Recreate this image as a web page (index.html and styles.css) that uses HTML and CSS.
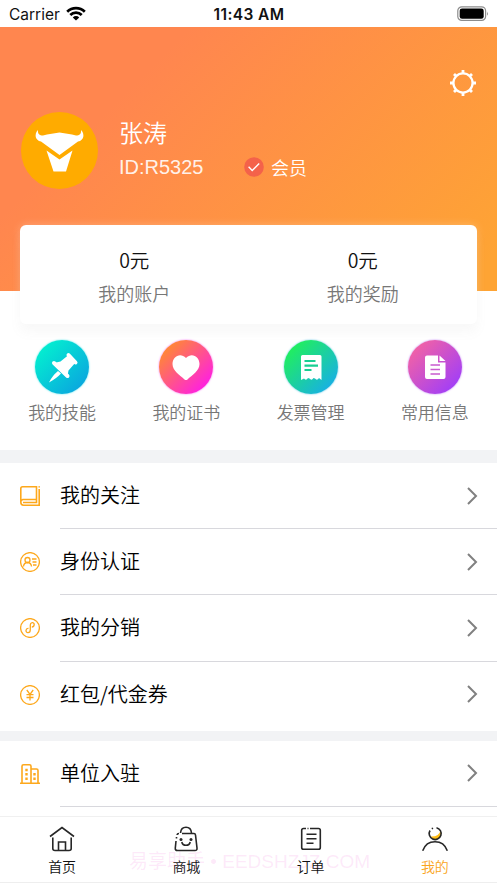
FILE: index.html
```
<!DOCTYPE html>
<html lang="zh-CN">
<head>
<meta charset="utf-8">
<title>我的</title>
<link rel="stylesheet" href="styles.css">
</head>
<body>
<div class="phone">
  <header class="status">
    <div class="carrier"><span>Carrier</span>
      <svg width="20" height="15" viewBox="0 0 20 15" fill="none" stroke="#000" stroke-width="2.7"><path d="M1.2 5.7a12.5 12.5 0 0 1 17.6 0M4.3 9a8 8 0 0 1 11.4 0"/><path d="M10 14.5 6.8 11.4a4.6 4.6 0 0 1 6.4 0Z" fill="#000" stroke="none"/></svg>
    </div>
    <div class="time">11:43 AM</div>
    <svg class="battery" width="32" height="16" viewBox="0 0 32 16"><rect x=".8" y=".8" width="27.8" height="13.6" rx="4" fill="none" stroke="#8c8c8c" stroke-width="1.2"/><rect x="2.7" y="2.5" width="24" height="10.2" rx="2.3"/><path d="M30 5.5q1.7 2 0 4.2Z" fill="#8c8c8c"/></svg>
  </header>

  <section class="hero">
    <svg class="gear" width="28" height="28" viewBox="0 0 28 28" fill="none" stroke="#fff"><circle cx="14" cy="14" r="9.6" stroke-width="2.3"/><path stroke-width="2.8" d="M14 4.5V1M14 23.5V27M4.5 14H1M23.5 14H27M7.3 7.3 5 5M20.7 7.3 23 5M7.3 20.7 5 23M20.7 20.7 23 23"/></svg>
    <div class="profile">
      <svg width="77" height="77" viewBox="0 0 77 77"><circle cx="38.5" cy="38.5" r="38.5" fill="#ffab00"/><path fill="#fff" d="M17 18C13 22 14 28.500 20 29.500L38.500 43 57 29.500C63 28.500 64 22 60 18 60.500 22 58.500 23.500 55 23.500L51 22.500 38.500 20.500 26 22.500 22 23.500C18.500 23.500 16.500 22 17 18ZM25.500 38.500 38.500 47.500 51.500 38.500 45 59.500H32.500Z"/></svg>
      <div class="who">
        <div class="name">张涛</div>
        <div class="idline"><span class="uid">ID:R5325</span>
          <svg width="20" height="20" viewBox="0 0 20 20"><circle cx="10" cy="10" r="9.8" fill="#f4624a"/><path d="m4.600 9.800 3.600 3.700 7-7" fill="none" stroke="#fff" stroke-width="1.400"/></svg>
          <span class="member">会员</span></div>
      </div>
    </div>
  </section>

  <section class="card">
    <div class="stat"><b>0元</b><span>我的账户</span></div>
    <div class="stat"><b>0元</b><span>我的奖励</span></div>
  </section>

  <nav class="quick">
    <div class="entry"><i class="disc cyan"><svg width="54" height="54" viewBox="0 0 54 54" fill="#fff" stroke="#fff" stroke-linejoin="round" stroke-linecap="round"><path d="m33.500 15 7 7.500M19 23 32.500 36" stroke-width="4"/><path stroke="none" d="m33.500 15 7 7.500L33.500 30.500 32.500 36 19 23 25.500 21.500ZM23 31 26 33.500Q22 38 14 42.500Q17 36 23 31Z"/></svg></i><span>我的技能</span></div>
    <div class="entry"><i class="disc pink"><svg width="54" height="54" viewBox="0 0 54 54" fill="#fff"><path d="M27 18C21 12 13.500 17 13.500 24C13.500 31 21 35 25.500 39.500Q27 40.500 28.500 39.500C33 35 40.500 31 40.500 24C40.500 17 33 12 27 18Z"/></svg></i><span>我的证书</span></div>
    <div class="entry"><i class="disc green"><svg width="54" height="54" viewBox="0 0 54 54"><path fill="#fff" d="M17 16.500Q17 15 18.500 15H36Q37.500 15 37.500 16.500V40L35 38Q33 41 31 38.500L29.500 38Q27.500 41 25.500 38.500L24 38Q22 41 20 38.500L17 40Z"/><path d="M20.500 21H31.500M20.500 25.700H34M20.500 30H27.500" stroke="#19cf92" stroke-width="2.200"/></svg></i><span>发票管理</span></div>
    <div class="entry"><i class="disc purple"><svg width="54" height="54" viewBox="0 0 54 54"><path fill="#fff" d="M19 15.500H30V22.500H37.500V37Q37.500 39 35.500 39H19Q17 39 17 37V17.500Q17 15.500 19 15.500ZM31.500 15.500 37.500 21H31.500Z"/><path d="M22.500 25H32M22.500 29.500H32M22.500 34H32" stroke="#c95bd0" stroke-width="1.500"/></svg></i><span>常用信息</span></div>
  </nav>

  <section class="list first">
    <div class="row"><svg class="ico" viewBox="0 0 20 20"><path d="M2.500.8H16.500V13.500H2.800A2.700 2.700 0 0 0 .8 16.200V2.500Q.8.8 2.500.8ZM.8 16Q.8 19.200 3.500 19.200H19.200V3M19.200.3V1.500M3 16.500H16.500V13.500"/></svg><div class="line"><span>我的关注</span><svg class="chev" viewBox="0 0 10 18"><path d="m1 1 8 8-8 8"/></svg></div></div>
    <div class="row"><svg class="ico thin" viewBox="0 0 20 20"><circle cx="10" cy="10" r="9.400"/><circle cx="7.500" cy="8" r="2.500"/><path d="M3.500 14.500Q3.800 10.700 7.500 10.500 11.200 10.700 11.500 14.500M12 7H16.500M12.500 10H16.500M13 13H16.500"/></svg><div class="line"><span>身份认证</span><svg class="chev" viewBox="0 0 10 18"><path d="m1 1 8 8-8 8"/></svg></div></div>
    <div class="row"><svg class="ico thin" viewBox="0 0 20 20"><circle cx="10" cy="10" r="9.400"/><path d="M8.500 10.300C5.500 10 5 14.500 8 14.700 10 14.700 10.300 13 10.300 11.500V7C10.300 4 14 3.700 14.200 6.300 14.200 8 13 9 11.800 9"/></svg><div class="line"><span>我的分销</span><svg class="chev" viewBox="0 0 10 18"><path d="m1 1 8 8-8 8"/></svg></div></div>
    <div class="row"><svg class="ico thin" viewBox="0 0 20 20"><circle cx="10" cy="10" r="9.400"/><path d="m6.800 5 3.200 4.500L13.200 5M6.500 9.700H13.500M6.500 12.500H13.500M10 9.500V15.500"/></svg><div class="line last"><span>红包/代金券</span><svg class="chev" viewBox="0 0 10 18"><path d="m1 1 8 8-8 8"/></svg></div></div>
  </section>
  <section class="list second">
    <div class="row"><svg class="ico" viewBox="0 0 20 20"><path d="M0 19.200H20M2 19V2.200Q2 .8 3.500.8H9.500Q11 .8 11 2.200V19M11 5H16.500Q18 5 18 6.500V19"/><path stroke-width="2.400" d="M5.300 6H7.700M5.300 10.300H7.700M5.300 14.700H7.700M13.300 10.300H15.700M13.300 14.700H15.700"/></svg><div class="line"><span>单位入驻</span><svg class="chev" viewBox="0 0 10 18"><path d="m1 1 8 8-8 8"/></svg></div></div>
  </section>

  <footer class="tabs">
    <div class="mark">易享助手 • EEDSHZJZ.COM</div>
    <div class="tab"><svg width="28" height="28" viewBox="0 0 28 28"><path d="M2 11.500 14 2.500 26 11.500M4.800 12.500V23.500Q4.800 25.500 7 25.500H21Q23.200 25.500 23.200 23.500V12.500M10.500 25V17H17.500V25"/></svg><span>首页</span></div>
    <div class="tab"><svg width="28" height="28" viewBox="0 0 28 28"><path d="M8.500 8Q9 2.300 14 2.300T19.500 8M10 8.500H22Q23.300 8.500 23.500 10L25 23Q25.300 25.500 23 25.500H5.500Q3 25.500 3.300 23L4 16M4.500 13.500V12M5 10Q5.200 8.500 7 8.500M9.800 17Q10.500 20.300 14 20.300T18.200 17"/><circle class="dot" cx="9" cy="14.500" r="1.500"/><circle class="dot" cx="19" cy="14.500" r="1.500"/></svg><span>商城</span></div>
    <div class="tab"><svg width="28" height="28" viewBox="0 0 28 28"><path d="M13 3.500H21.500Q23.300 3.500 23.300 5.300V22.500Q23.300 24.300 21.500 24.300H6.500Q4.700 24.300 4.700 22.500V5.300Q4.700 3.500 6.500 3.500H9M10.500 3.500H11.500M9.500 9.300H19.500M9.500 13.800H19.500M9.500 18.300H16.500"/></svg><span>订单</span></div>
    <div class="tab active"><svg width="28" height="28" viewBox="0 0 28 28"><path class="gold" d="M19.500 5.500Q18 12 9.500 11.500 12 15 16 14.300 21.500 12 19.500 5.500Z"/><path d="M15.500 2.700A6 6 0 1 1 9 5.500M10.800 3.800 12 3.100M1.700 25.700C6 13.800 22 13.800 26.300 25.700"/></svg><span>我的</span></div>
  </footer>
</div>
</body>
</html>
```
FILE: styles.css
```
* { box-sizing: border-box; }
body { margin: 0; font-family: "Noto Sans CJK SC", sans-serif; font-weight: 350; background: #fff; }
svg { display: block; flex: none; }
.phone { width: 497px; height: 883px; overflow: hidden; display: flex; flex-direction: column; }
.status { height: 27px; flex: none; display: grid; grid-template-columns: 1fr auto 1fr; align-items: center; padding: 0 8px 0 9px; font-family: Inter, sans-serif; font-size: 15.5px; color: #111; }
.carrier { display: flex; align-items: center; gap: 6px; font-weight: 400; }
.carrier span { padding-top: 1px; }
.time { font-weight: 600; font-size: 15.5px; letter-spacing: .4px; padding-top: 1px; }
.battery { justify-self: end; }
.hero { height: 264px; flex: none; background: linear-gradient(135deg, #ff864f 25%, #fea434 95%); color: #fff; padding: 42px 20px 0 21px; }
.gear { margin-left: auto; }
.profile { display: flex; margin-top: 15px; }
.who { margin-left: 21px; padding-top: 3px; }
.name { font-size: 24px; line-height: 34px; }
.idline { display: flex; align-items: center; height: 34px; margin-top: 1px; }
.uid { font-family: "Liberation Sans", sans-serif; font-size: 20px; width: 125px; color: rgba(255,255,255,.9); }
.member { font-size: 18px; margin-left: 7px; }
.card { height: 99px; flex: none; margin: -66px 20px 0; background: #fff; border-radius: 6px; display: flex; box-shadow: 0 8px 12px rgba(130,130,130,.06), 0 0 8px rgba(255,255,255,.25); }
.stat { flex: 1; display: flex; flex-direction: column; align-items: center; padding-top: 18px; }
.stat b { font-size: 19.500px; line-height: 34px; font-weight: 350; color: #111; }
.stat span { font-size: 18px; line-height: 32px; color: #777; }
.quick { display: flex; height: 126px; flex: none; padding-top: 16px; }
.entry { flex: 1; display: flex; flex-direction: column; align-items: center; font-size: 17px; line-height: 28px; color: #777; gap: 4px; }
.disc { width: 54px; height: 54px; border-radius: 50%; }
.cyan { background: linear-gradient(135deg, #03efd0 12%, #0aa5df 90%); box-shadow: 0 0 2px #43e5e8; }
.pink { background: linear-gradient(135deg, #ff8a31 12%, #ff1be9 90%); box-shadow: 0 0 2px #f35af0; }
.green { background: linear-gradient(135deg, #21f05b 12%, #17aee8 90%); box-shadow: 0 0 2px #48bce0; }
.purple { background: linear-gradient(135deg, #f262a5 12%, #9f3dfa 90%); box-shadow: 0 0 2px #b971f5; }
.list { flex: none; border-top: 13px solid #f2f3f5; }
.second { border-top-width: 10px; }
.row { height: 66.200px; display: flex; align-items: center; padding-left: 20px; }
.first .row:last-child { height: 69px; align-items: flex-start; }
.first .row:last-child .ico { margin-top: 23px; }
.ico { width: 20px; height: 20px; fill: none; stroke: #fda81c; stroke-width: 1.600; }
.thin { stroke-width: 1.300; }
.line { height: 66.200px; margin-left: 20px; flex: 1; display: flex; align-items: center; justify-content: space-between; border-bottom: 1px solid #d8d8dd; padding-right: 20px; font-size: 20px; color: #000; }
.line span { padding-bottom: 2px; }
.last { border-bottom-color: transparent; }
.chev { width: 10px; height: 18px; fill: none; stroke: #808080; stroke-width: 2; overflow: visible; }
.tabs { height: 67px; flex: none; margin-top: auto; background: #fff; border-top: 1px solid #f0f0f0; border-bottom: 1px solid #eee; display: flex; position: relative; }
.tab { flex: 1; display: flex; flex-direction: column; align-items: center; padding-top: 8px; font-size: 14px; line-height: 20px; color: #111; gap: 3px; position: relative; }
.tab svg { fill: none; stroke: #272727; stroke-width: 1.600; }
.tab .dot { fill: #272727; stroke: none; }
.tab .gold { fill: #ffbd16; stroke: none; }
.tab.active { color: #faa51c; }
.mark { position: absolute; left: 129px; top: 31px; font-size: 19px; line-height: 27px; font-family: "Liberation Sans", "Noto Sans CJK SC", sans-serif; font-weight: 400; color: rgba(244,120,220,.16); white-space: nowrap; }
```
